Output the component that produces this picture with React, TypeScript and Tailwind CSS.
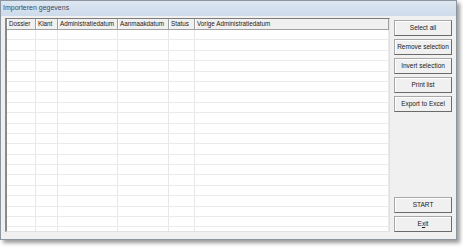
import React from 'react';

const columns = [
  { label: 'Dossier', width: 'w-[29px]' },
  { label: 'Klant', width: 'w-[22px]' },
  { label: 'Administratiedatum', width: 'w-[60px]' },
  { label: 'Aanmaakdatum', width: 'w-[51px]' },
  { label: 'Status', width: 'w-[26px]' },
  { label: 'Vorige Administratiedatum', width: 'flex-1' },
];

const rows = Array.from({ length: 20 }, (_, i) => i);

const WinButton: React.FC<{ children: React.ReactNode }> = ({ children }) => (
  <button className="h-[16px] shrink-0 w-full border border-[#a8a8a8] border-r-[#6a6a6a] border-b-[#6a6a6a] bg-[#f0f0f0] shadow-[inset_1px_1px_0_#ffffff] text-[6.5px] leading-none text-[#1a1a1a]">
    {children}
  </button>
);

export default function App() {
  return (
    <div className="w-[463px] h-[248px] bg-white font-['Liberation_Sans',Arial,sans-serif]">
      <div className="w-[457px] h-[240px] flex flex-col border border-[#8d959e] bg-[#f0f0f0] shadow-[3px_3px_4px_rgba(0,0,0,0.4)]">
        <div className="h-[15px] shrink-0 flex items-center px-[2px] bg-gradient-to-b from-[#dde7f2] to-[#cddaea] text-[7px] text-[#3d4b5c]">
          Importeren gegevens
        </div>
        <div className="flex-1 min-h-0 flex pl-[4px] pr-[4px] pt-[2px] pb-[7px] gap-[4px]">
          <div className="w-[385px] h-full min-h-0 flex flex-col bg-white border-l-2 border-t border-[#7c7c7c] border-l-[#8a8a8a] border-r border-b border-r-[#e2e2e2] border-b-[#e2e2e2] overflow-hidden">
            <div className="flex h-[11px] shrink-0 bg-[#f0f0f0] border-b border-[#a0a0a0]">
              {columns.map(c => (
                <div key={c.label} className={`${c.width} shrink-0 border-r border-[#a0a0a0] shadow-[inset_1px_0_0_#ffffff] px-[2px] flex items-center text-[6.3px] leading-none text-[#1a1a1a] whitespace-nowrap overflow-hidden`}>
                  {c.label}
                </div>
              ))}
            </div>
            {rows.map(r => (
              <div key={r} className="flex h-[10.4px] shrink-0 border-b border-[#ebebeb]">
                {columns.map(c => (
                  <div key={c.label} className={`${c.width} shrink-0 border-r border-[#e8e8e8]`} />
                ))}
              </div>
            ))}
          </div>
          <div className="flex-1 min-h-0 flex flex-col pt-[2px] gap-[3px]">
            <WinButton>Select all</WinButton>
            <WinButton>Remove selection</WinButton>
            <WinButton>Invert selection</WinButton>
            <WinButton>Print list</WinButton>
            <WinButton>Export to Excel</WinButton>
            <div className="flex-1" />
            <WinButton>START</WinButton>
            <WinButton>
              E<span className="underline">x</span>it
            </WinButton>
          </div>
        </div>
      </div>
    </div>
  );
}
